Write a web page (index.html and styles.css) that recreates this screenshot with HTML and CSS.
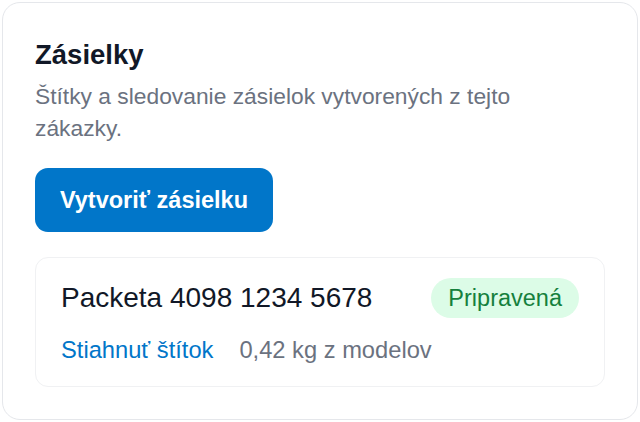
FILE: index.html
```html
<!DOCTYPE html>
<html lang="sk">
<head>
<meta charset="utf-8">
<title>Zásielky</title>
<link rel="stylesheet" href="styles.css">
</head>
<body>
<div class="page">
  <section class="card">
    <h2 class="title">Zásielky</h2>
    <p class="subtitle">Štítky a sledovanie zásielok vytvorených z tejto zákazky.</p>
    <div class="actions">
      <button class="btn" type="button">Vytvoriť zásielku</button>
    </div>
    <div class="shipment">
      <div class="shipment-row">
        <span class="tracking">Packeta 4098 1234 5678</span>
        <span class="badge">Pripravená</span>
      </div>
      <div class="shipment-meta">
        <a class="link" href="#">Stiahnuť štítok</a>
        <span class="weight">0,42 kg z modelov</span>
      </div>
    </div>
  </section>
</div>
</body>
</html>
```

FILE: styles.css
```css
* { box-sizing: border-box; }
html, body { margin: 0; padding: 0; background: #ffffff; }
body { font-family: "Liberation Sans", Arial, sans-serif; }
.page { padding: 2px; }
.card {
  border: 1px solid #e5e7eb;
  border-radius: 18px;
  padding: 32px;
  background: #fff;
}
.title {
  margin: 0;
  font-size: 27.5px;
  line-height: 40px;
  font-weight: 700;
  color: #111827;
}
.subtitle {
  margin: 5px 0 0;
  max-width: 555px;
  font-size: 22.8px;
  line-height: 32px;
  color: #6b7280;
}
.actions { margin-top: 24px; display: flex; }
.btn {
  font-family: inherit;
  font-size: 23.5px;
  font-weight: 700;
  line-height: 28px;
  color: #fff;
  background: #0176c9;
  border: 0;
  border-radius: 13px;
  padding: 18px 25px;
  cursor: pointer;
}
.shipment {
  margin-top: 25px;
  border: 1px solid #f0f1f3;
  border-radius: 13px;
  padding: 20px 25px;
}
.shipment-row {
  display: flex;
  align-items: center;
  justify-content: space-between;
}
.tracking { font-size: 28px; line-height: 34px; color: #111827; }
.badge {
  background: #dcfce7;
  color: #15803d;
  font-size: 23.5px;
  line-height: 40px;
  padding: 0 17px;
  border-radius: 999px;
}
.shipment-meta {
  margin-top: 16px;
  display: flex;
  gap: 26px;
  font-size: 23.7px;
  line-height: 32px;
}
.link { color: #0176c9; text-decoration: none; }
.weight { color: #6b7280; }
```
